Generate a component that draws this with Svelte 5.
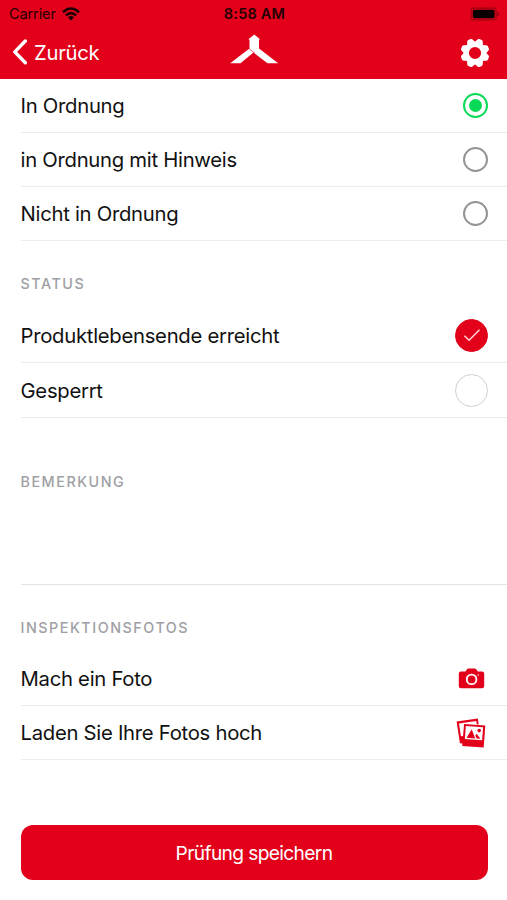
<script>
  let result = $state(0);
  let flags = $state([
    { label: 'Produktlebensende erreicht', on: true },
    { label: 'Gesperrt', on: false }
  ]);
  const results = ['In Ordnung', 'in Ordnung mit Hinweis', 'Nicht in Ordnung'];
  const teeth = [0, 45, 90, 135, 180, 225, 270, 315];
</script>

<div class="screen">
  <header>
    <div class="statusbar">
      <div class="carrier">
        <span>Carrier</span>
        <svg width="18" height="14" viewBox="0 0 18 14" fill="none" stroke="#180003" stroke-width="2.6">
          <path d="M1 5.2Q9-2.2 17 5.2" />
          <path d="M3.9 8.4Q9 3.8 14.1 8.4" />
          <path d="M9 13.5L5.9 10.3Q9 7.6 12.1 10.3Z" fill="#180003" stroke="none" />
        </svg>
      </div>
      <span class="clock">8:58 AM</span>
      <svg class="battery" width="30" height="14" viewBox="0 0 30 14">
        <rect x="1.1" y="1.1" width="25" height="11.8" rx="3" fill="none" stroke="#9c0012" stroke-width="1.1" />
        <rect x="2.8" y="2.7" width="21.7" height="8.6" rx="1.5" fill="#090001" />
        <path d="M27.3 4.8Q29.2 5.6 29.2 7T27.3 9.2Z" fill="#8c0010" />
      </svg>
    </div>
    <nav>
      <button class="back">
        <svg width="16" height="26" viewBox="0 0 16 26" fill="none" stroke="#fff" stroke-width="3.4" stroke-linecap="round" stroke-linejoin="round">
          <path d="M13.3 2L2.8 12.9L13.3 23.8" />
        </svg>
        <span>Zurück</span>
      </button>
      <svg class="logo" width="50" height="32" viewBox="0 0 50 32">
        <path fill="#fff" d="M25.3 1.5L31 6.2L30 6.8V15.5L49.2 30.3H38.5L24.5 19.5L11.5 30.3H1.2L20.5 15.5V6.8L19.4 6.2Z" />
        <path d="M20.2 15.8L26 20.4" stroke="#e2001a" stroke-width=".6" fill="none" />
      </svg>
      <svg class="gear" width="30" height="30" viewBox="-15 -15 30 30" fill="#fff">
        {#each teeth as angle}
          <path d="M-4.8-9L-3.1-13Q-2.5-14.5-1.3-14.5H1.3Q2.5-14.5 3.1-13L4.8-9Z" transform="rotate({angle + 22.5})" />
        {/each}
        <circle r="8.7" fill="none" stroke="#fff" stroke-width="5.2" />
      </svg>
    </nav>
  </header>

  <main>
    {#each results as label, i}
      <button class="row" onclick={() => (result = i)}>
        <span>{label}</span>
        <i class="radio" class:picked={result === i}></i>
      </button>
    {/each}

    <h2>STATUS</h2>
    {#each flags as flag}
      <button class="row tall" onclick={() => (flag.on = !flag.on)}>
        <span>{flag.label}</span>
        <i class="check" class:on={flag.on}>
          {#if flag.on}
            <svg width="18" height="14" viewBox="0 0 18 14" fill="none" stroke="#ffd5d9" stroke-width="1.5">
              <path d="M1.4 7.8L6.1 12.2L16.5 1.8" />
            </svg>
          {/if}
        </i>
      </button>
    {/each}

    <h2 class="remark-title">BEMERKUNG</h2>
    <div class="remark"></div>

    <h2>INSPEKTIONSFOTOS</h2>
    <button class="row">
      <span>Mach ein Foto</span>
      <svg class="camera" width="27" height="21" viewBox="0 0 27 21">
        <path fill="#e2001a" d="M3 3.4H7.4L9 1.3Q9.6.6 10.6.6H16.6Q17.6.6 18.2 1.3L19.8 3.4H24Q26.2 3.4 26.2 5.6V18Q26.2 20.2 24 20.2H3Q.8 20.2.8 18V5.6Q.8 3.4 3 3.4Z" />
        <circle cx="13.6" cy="11.4" r="4.8" fill="none" stroke="#fff" stroke-width="1.8" />
        <circle cx="20.2" cy="7" r=".7" fill="#fff" />
      </svg>
    </button>
    <button class="row">
      <span>Laden Sie Ihre Fotos hoch</span>
      <svg class="pictures" width="30" height="30" viewBox="0 0 30 30">
        <path fill="#e2001a" d="M.6 3.5L21.8.5L22.7 6.4L20.7 6.2L20.2 2.9L3 5.4L4.9 18.3L7.5 18L7 25.4L3.9 25.2Z" />
        <path fill="#e2001a" fill-rule="evenodd" d="M8.1 5.9L29.3 7.5L27.7 29.5L6.2 27.9ZM9.8 8L8.9 20.9L26.1 22.2L27.1 9.3Z" />
        <path fill="#e2001a" d="M10.6 19.7L15.7 11.2L19.2 20.4ZM20.6 15.8L24.4 20.7L20.7 20.4L19.3 17.5Z" />
        <circle cx="23.2" cy="12.6" r="1.8" fill="#e2001a" />
      </svg>
    </button>

    <button class="save">Prüfung speichern</button>
  </main>
</div>

<style>
  :global(body) {
    margin: 0;
    background: #fff;
  }
  .screen {
    height: 900px;
    overflow: hidden;
    background: #fff;
    color: #111;
    font-family: Inter, 'Liberation Sans', sans-serif;
  }
  button {
    margin: 0;
    padding: 0;
    border: 0;
    background: none;
    font: inherit;
    color: inherit;
    text-align: left;
  }
  svg {
    display: block;
    flex: none;
  }
  header {
    height: 79px;
    background: #e2001a;
  }
  .statusbar {
    box-sizing: border-box;
    height: 27px;
    padding: 0 7px 0 9px;
    display: grid;
    grid-template-columns: 1fr auto 1fr;
    align-items: center;
    color: #240004;
    font-size: 14.5px;
  }
  .carrier {
    display: flex;
    align-items: center;
    gap: 6px;
    letter-spacing: -0.1px;
  }
  .clock {
    font-weight: 600;
    letter-spacing: 0.2px;
  }
  .battery {
    justify-self: end;
  }
  nav {
    height: 50px;
    padding: 0 17px 0 12px;
    display: grid;
    grid-template-columns: 1fr auto 1fr;
    align-items: center;
  }
  .back {
    display: flex;
    align-items: center;
    gap: 6px;
    color: #fff;
    font-size: 20.3px;
    letter-spacing: -0.3px;
  }
  .logo {
    margin-top: -6px;
    margin-left: 5px;
  }
  .gear {
    justify-self: end;
    margin-top: 2px;
  }
  main {
    display: flex;
    flex-direction: column;
  }
  .row {
    box-sizing: border-box;
    height: 54px;
    margin-left: 21px;
    padding-right: 19px;
    display: flex;
    align-items: center;
    justify-content: space-between;
    border-bottom: 1px solid #ececec;
    font-size: 20.3px;
    letter-spacing: -0.28px;
    white-space: nowrap;
  }
  .row.tall {
    height: 55px;
  }
  .row > span {
    margin-left: -0.5px;
  }
  .radio {
    box-sizing: border-box;
    width: 25px;
    height: 25px;
    border: 2px solid #949494;
    border-radius: 50%;
    display: grid;
    place-items: center;
  }
  .picked {
    border-color: #08d957;
  }
  .picked::after {
    content: '';
    width: 13px;
    height: 13px;
    border-radius: 50%;
    background: #08d957;
  }
  .check {
    box-sizing: border-box;
    width: 33px;
    height: 33px;
    border: 1.5px solid #cfcfcf;
    border-radius: 50%;
    display: grid;
    place-items: center;
  }
  .check.on {
    border-color: #e2001a;
    background: #e2001a;
  }
  h2 {
    box-sizing: border-box;
    height: 67px;
    margin: 0;
    padding: 33px 0 0 20.5px;
    font-size: 14.3px;
    font-weight: 500;
    line-height: 20px;
    letter-spacing: 1.55px;
    color: #a0a0a4;
  }
  .remark-title {
    height: 74px;
    padding-top: 54px;
  }
  .remark {
    height: 92px;
    margin-left: 21px;
    border-bottom: 1px solid #e4e4e4;
  }
  .camera {
    margin-right: 3.5px;
  }
  .pictures {
    margin-right: 2px;
  }
  .save {
    height: 55px;
    margin: 65px 19.5px 0 20.5px;
    border-radius: 12px;
    background: #e2001a;
    color: #fff;
    font-size: 19.2px;
    letter-spacing: -0.65px;
    text-align: center;
  }
</style>
